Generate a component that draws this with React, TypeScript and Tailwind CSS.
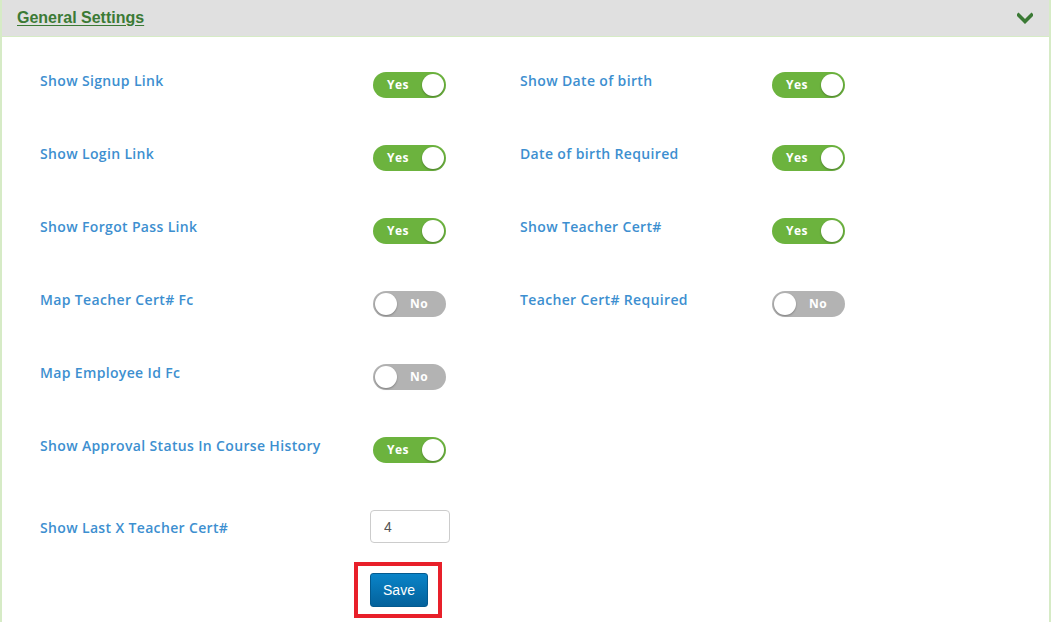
import React from "react";

function Toggle({ on }: { on: boolean }) {
  if (on) {
    return (
      <div className="relative h-[26px] w-[73px] rounded-full bg-[#6cb33e] flex items-center">
        <span className="ml-[14px] text-[12px] font-bold text-white tracking-[0.5px] [font-family:'Open_Sans',sans-serif]">Yes</span>
        <span className="absolute right-[2px] top-[2px] h-[22px] w-[22px] rounded-full bg-white shadow-[0_1px_2px_rgba(0,0,0,0.3)]" />
      </div>
    );
  }
  return (
    <div className="relative h-[26px] w-[73px] rounded-full bg-[#b3b3b3] flex items-center">
      <span className="absolute left-[2px] top-[2px] h-[22px] w-[22px] rounded-full bg-white shadow-[0_1px_2px_rgba(0,0,0,0.3)]" />
      <span className="ml-[37px] text-[12px] font-bold text-white tracking-[0.5px] [font-family:'Open_Sans',sans-serif]">No</span>
    </div>
  );
}

function Row({ label, on, labelW }: { label: string; on: boolean; labelW: string }) {
  return (
    <div className="flex items-start h-[26px]">
      <div className={`${labelW} -mt-[1px] text-[14px] leading-[20px] font-semibold tracking-[0.35px] text-[#3d8fd0] [font-family:'Open_Sans',sans-serif]`}>{label}</div>
      <Toggle on={on} />
    </div>
  );
}

export default function App() {
  const left: [string, boolean][] = [
    ["Show Signup Link", true],
    ["Show Login Link", true],
    ["Show Forgot Pass Link", true],
    ["Map Teacher Cert# Fc", false],
    ["Map Employee Id Fc", false],
    ["Show Approval Status In Course History", true],
  ];
  const right: [string, boolean][] = [
    ["Show Date of birth", true],
    ["Date of birth Required", true],
    ["Show Teacher Cert#", true],
    ["Teacher Cert# Required", false],
  ];
  return (
    <div className="w-[1051px] h-[622px] bg-white overflow-hidden">
      <div className="h-full border-l-2 border-r-2 border-[#d6ebc6] flex flex-col">
        <div className="h-[37px] bg-[#e0e0e0] border-b border-[#d6ebc6] flex items-center justify-between pl-[15px] pr-[16px] shrink-0">
          <span className="text-[16px] font-bold text-[#3b7a35] underline underline-offset-2 [font-family:'Liberation_Sans',Arial,sans-serif]">
            General Settings
          </span>
          <svg width="16" height="12" viewBox="0 0 16 12">
            <path d="M1.5 3 L8 9.5 L14.5 3" fill="none" stroke="#3b7a35" strokeWidth="3.6" strokeLinecap="square" />
          </svg>
        </div>
        <div className="pl-[38px] pt-[35px]">
          <div className="flex">
            <div className="w-[480px] flex flex-col gap-[47px]">
              {left.map(([l, o]) => (
                <Row key={l} label={l} on={o} labelW="w-[333px]" />
              ))}
            </div>
            <div className="flex flex-col gap-[47px]">
              {right.map(([l, o]) => (
                <Row key={l} label={l} on={o} labelW="w-[252px]" />
              ))}
            </div>
          </div>
          <div className="flex items-center mt-[47px] h-[33px]">
            <div className="w-[330px] pt-[3px] text-[14px] leading-[20px] font-semibold tracking-[0.35px] text-[#3d8fd0] [font-family:'Open_Sans',sans-serif]">
              Show Last X Teacher Cert#
            </div>
            <input
              defaultValue="4"
              className="h-[33px] w-[80px] rounded-[4px] border border-[#cccccc] px-[13px] text-[14px] text-[#555] [font-family:'Liberation_Sans',Arial,sans-serif] outline-none"
            />
          </div>
          <div className="mt-[19px] ml-[314px] w-[88px] h-[56px] border-4 border-[#e8202a] pt-[7px] pl-[12px]">
            <button className="h-[34px] w-[58px] rounded-[3px] bg-gradient-to-b from-[#0a84c8] to-[#04629c] border border-[#035a8f] text-white text-[14px] [font-family:'Liberation_Sans',Arial,sans-serif]">
              Save
            </button>
          </div>
        </div>
      </div>
    </div>
  );
}
